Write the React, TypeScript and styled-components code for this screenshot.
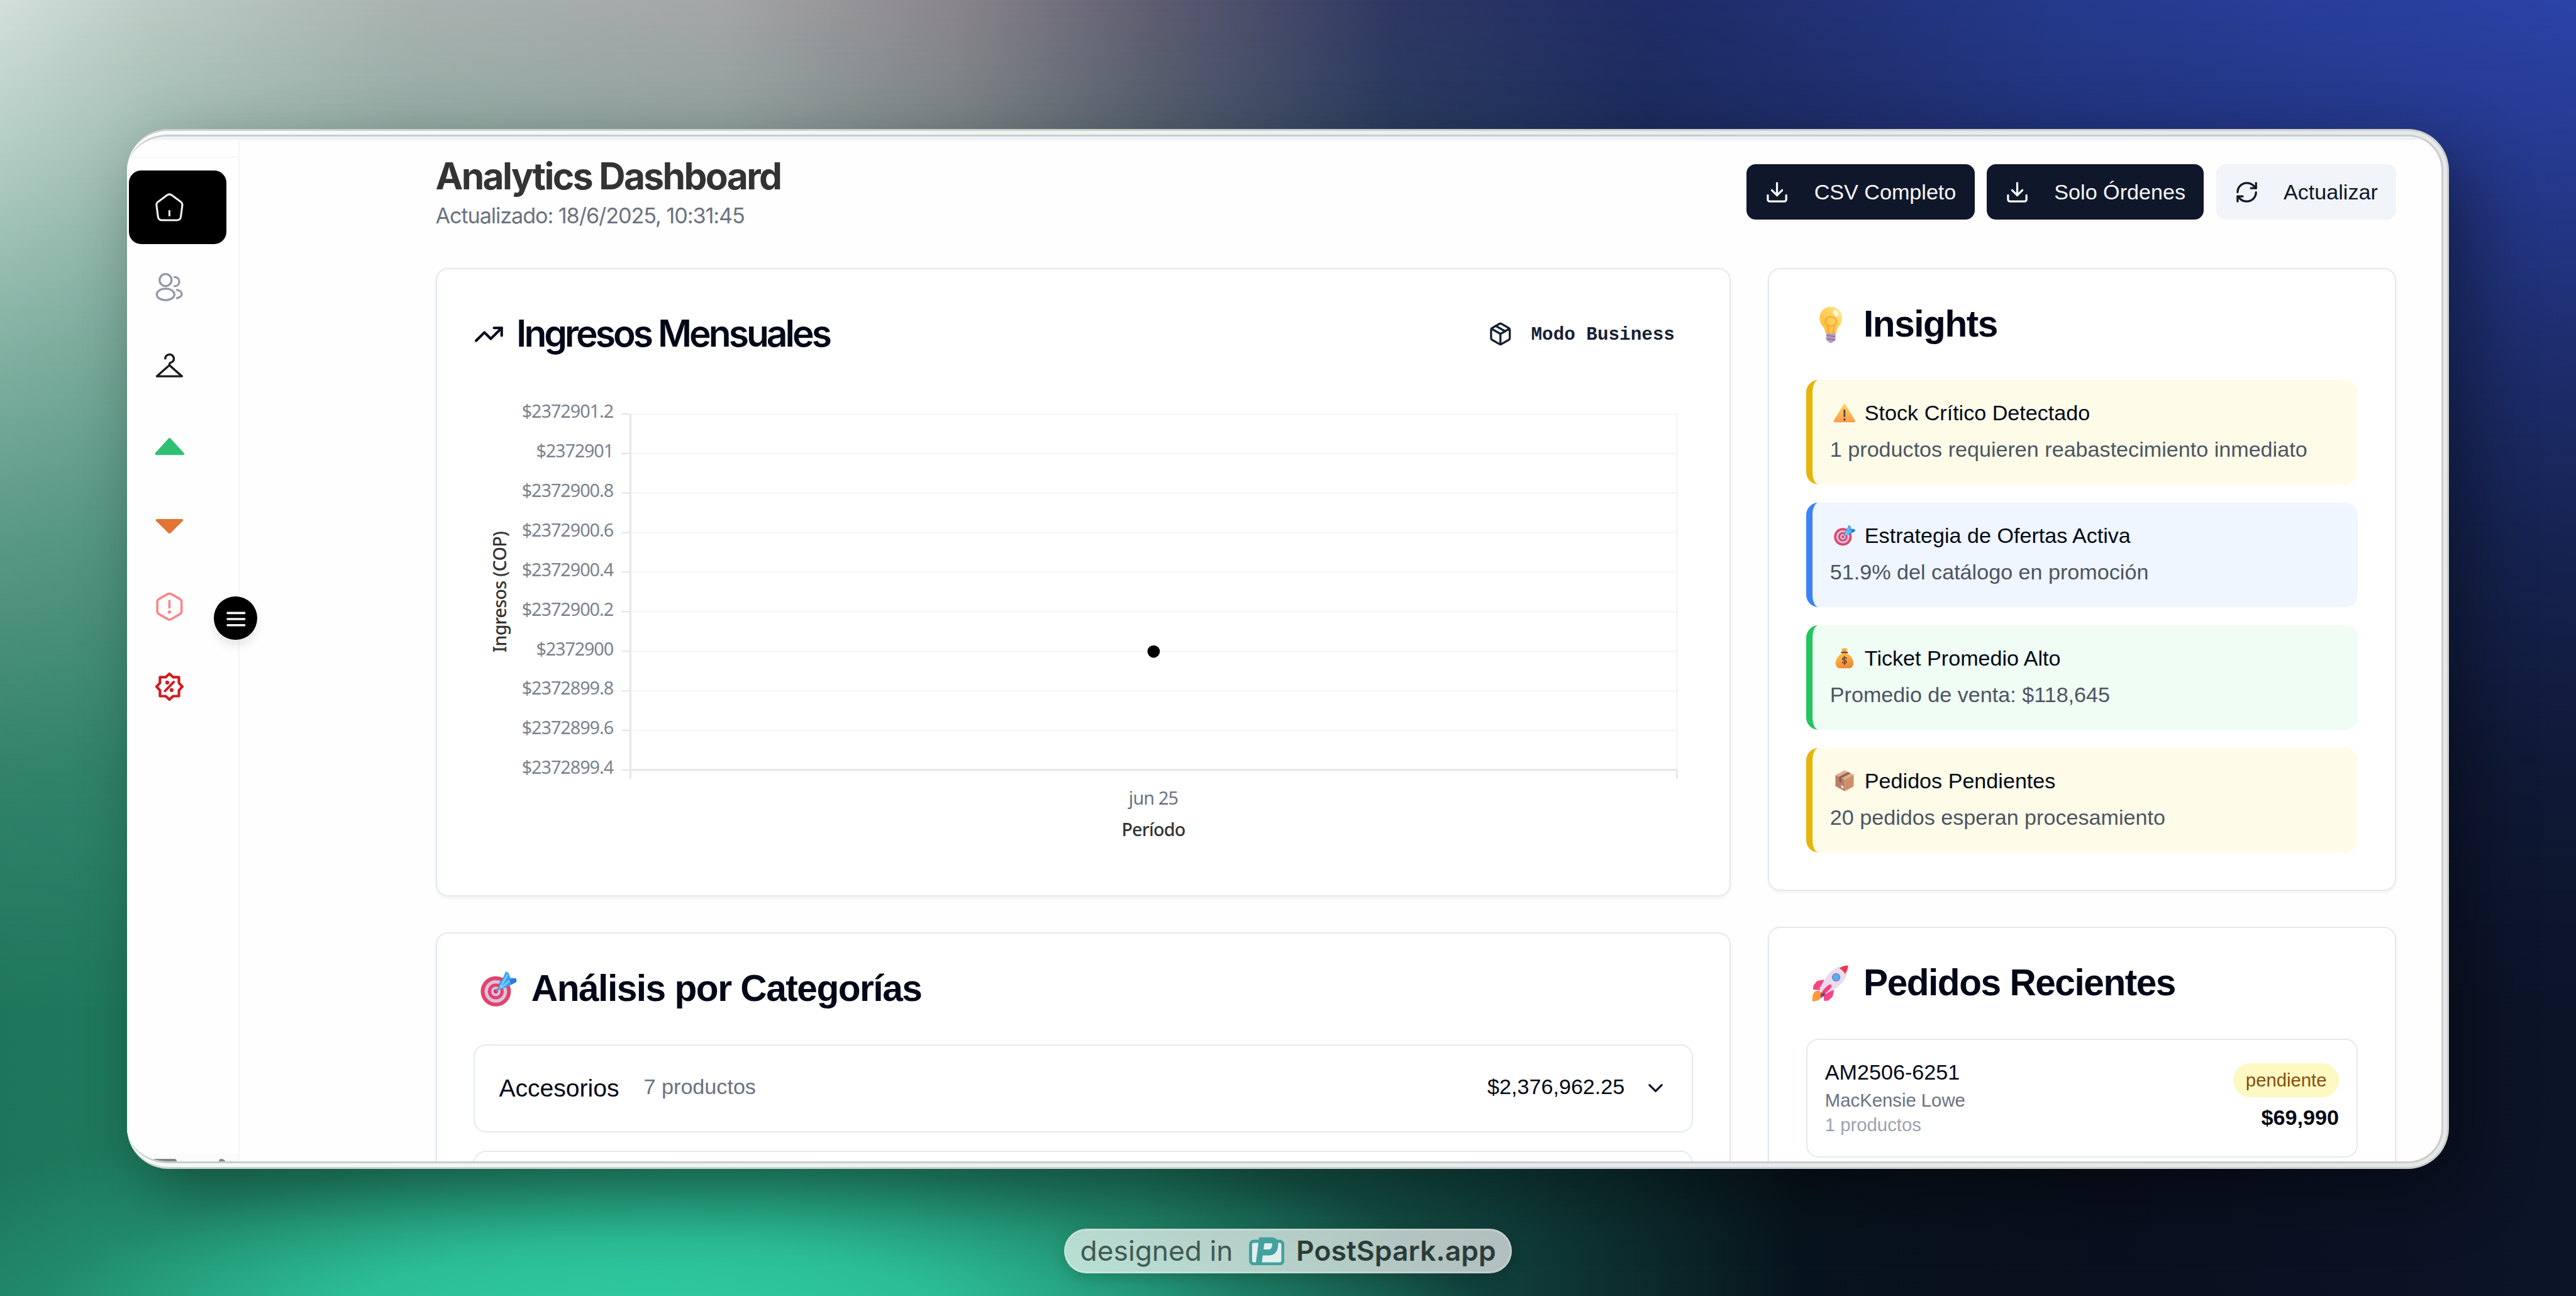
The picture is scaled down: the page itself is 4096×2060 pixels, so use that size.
import React from "react";
import styled, { createGlobalStyle } from "styled-components";
import { ChevronDown, Download, Package, RefreshCw, TrendingUp } from "lucide-react";

const SCALE = 4096 / 4140;
const u = (n: number) => `${(n * SCALE).toFixed(2)}px`;

const sans = `"Liberation Sans", Arial, sans-serif`;
const inter = `Inter, "Liberation Sans", sans-serif`;

const GlobalStyle = createGlobalStyle`
  * { box-sizing: border-box; }
  html, body { margin: 0; padding: 0; }
  body { font-family: ${sans}; color: #020817; overflow: hidden; }
  svg { display: block; flex: none; }
`;

/* ---------- Backdrop ---------- */

const Backdrop = styled.div`
  position: relative;
  width: 4096px;
  height: 2060px;
  overflow: hidden;
  display: flex;
  flex-direction: column;
  padding-top: ${u(207)};
  background: linear-gradient(90deg, #d3e0db 0%, #bccbc5 6%, #a9b3b0 16%, #a5a6a8 28%, #8b868c 37%, #5d5c70 45%, #2f3863 54%, #1f2c66 64%, #253a8c 80%, #2c43a8 100%);
  isolation: isolate;

  &::before {
    content: "";
    position: absolute;
    inset: 0;
    z-index: -1;
    background: linear-gradient(90deg, #1d765b 0%, #1e7c5f 12%, #208768 30%, #1b6f58 44%, #103f3b 58%, #07131c 70%, #090f1e 82%, #0c1428 100%);
    mask-image: linear-gradient(180deg, transparent 0%, rgba(0, 0, 0, 0.18) 12%, rgba(0, 0, 0, 0.43) 26%, rgba(0, 0, 0, 0.68) 42%, rgba(0, 0, 0, 0.89) 60%, #000 78%);
  }

  &::after {
    content: "";
    position: absolute;
    inset: 0;
    z-index: -1;
    background: radial-gradient(ellipse 33% 20% at 25% 104%, rgba(48, 210, 167, 1) 0%, rgba(46, 200, 158, 0.85) 40%, rgba(40, 170, 135, 0.35) 75%, rgba(32, 140, 110, 0) 100%);
  }
`;

/* ---------- Window frame ---------- */

const FrameOuter = styled.div`
  margin-left: ${u(204)};
  width: ${u(3732)};
  height: ${u(1671)};
  flex: none;
  padding: ${u(3)} ${u(3)} ${u(3)} 0;
  border-radius: ${u(66)};
  background: #cbcfcd;
  box-shadow: ${u(30)} ${u(40)} ${u(105)} rgba(0, 0, 0, 0.38);
`;

const FrameMiddle = styled.div`
  height: 100%;
  padding: ${u(6)} ${u(6)} ${u(6)} 0;
  border-radius: ${u(66)} ${u(63)} ${u(63)} ${u(66)} / ${u(63)};
  background: linear-gradient(105deg, #f9fbf9 0%, #e9f7f3 35%, #e8ebee 65%, #e5e7e9 100%);
`;

const FrameInner = styled.div`
  height: 100%;
  padding: ${u(3)} ${u(3)} ${u(3)} 0;
  border-radius: ${u(66)} ${u(57)} ${u(57)} ${u(66)} / ${u(57)};
  background: #cacdcc;
`;

const Screen = styled.div`
  position: relative;
  height: 100%;
  display: flex;
  flex-direction: column;
  overflow: hidden;
  border-radius: ${u(66)} ${u(54)} ${u(54)} ${u(66)} / ${u(54)};
  background: #fefefe;
`;

const BrowserEdge = styled.div`
  flex: none;
  height: ${u(6)};
  background: #edf2fc;
  border-bottom: 2px solid #f3f3f4;
`;

const Body = styled.div`
  flex: 1;
  min-height: 0;
  display: flex;
`;

/* ---------- Sidebar ---------- */

const Sidebar = styled.aside`
  flex: none;
  width: ${u(181)};
  display: flex;
  flex-direction: column;
  border-right: 2px solid #f5f5f6;
`;

const SidebarTop = styled.div`
  flex: none;
  height: ${u(29)};
  border-bottom: 2px solid #f6f6f6;
`;

const Nav = styled.nav`
  flex: 1;
  display: flex;
  flex-direction: column;
  gap: ${u(9.9)};
  padding: ${u(20)} 0 0 ${u(3.6)};
`;

const NavItem = styled.a<{ $active?: boolean }>`
  flex: none;
  width: ${u(156)};
  height: ${u(118.4)};
  padding-left: ${u(39.8)};
  display: flex;
  align-items: center;
  border-radius: ${u(19.7)};
  background: ${(p) => (p.$active ? "#000" : "transparent")};

  svg { width: ${u(49.3)}; height: ${u(49.3)}; overflow: visible; }
`;

const SidebarFooter = styled.div`
  flex: none;
  height: ${u(12.5)};
  padding: ${u(8)} 0 0 ${u(42)};
  display: flex;
  gap: ${u(68)};
  background: #fbfbfb;
`;

const FooterAvatar = styled.div`
  width: ${u(38)};
  height: ${u(20)};
  border-radius: ${u(4)};
  background: #868686;
`;

const FooterCaret = styled.div`
  width: ${u(11)};
  height: ${u(20)};
  border-radius: ${u(5)} ${u(9)} 0 0;
  background: #8b8b8b;
`;

const MenuToggle = styled.button`
  position: absolute;
  left: ${u(140)};
  top: ${u(739)};
  width: ${u(69)};
  height: ${u(70)};
  padding: 0;
  border: 0;
  border-radius: 50%;
  background: #000;
  display: grid;
  place-items: center;
  box-shadow: 0 ${u(10)} ${u(15)} rgba(0, 0, 0, 0.09);

  svg { width: ${u(36)}; height: ${u(36)}; }
`;

/* ---------- Main ---------- */

const Main = styled.main`
  flex: 1;
  padding: ${u(19)} ${u(73)} 0 ${u(315)};
`;

const Header = styled.header`
  height: ${u(127)};
  display: flex;
  align-items: center;
  justify-content: space-between;
`;

const PageTitle = styled.h1`
  margin: 0;
  padding-top: ${u(1.5)};
  font: 650 ${u(59.2)} / ${u(77.5)} ${inter};
  letter-spacing: ${u(-2.6)};
  color: #333;
`;

const Updated = styled.p`
  margin: 0;
  font: 400 ${u(34.5)} / ${u(49.3)} ${inter};
  letter-spacing: ${u(-1.06)};
  color: #6b7280;
`;

const Actions = styled.div`
  display: flex;
  gap: ${u(19.7)};
  padding-top: ${u(2)};
`;

const ActionButton = styled.button<{ $soft?: boolean }>`
  height: ${u(89)};
  padding: 0 ${u(29.5)};
  display: flex;
  align-items: center;
  gap: ${u(39.5)};
  border: 0;
  border-radius: ${u(15)};
  font: 400 ${u(34.5)} / ${u(49.3)} ${sans};
  color: ${(p) => (p.$soft ? "#0f172a" : "#f8fafc")};
  background: ${(p) => (p.$soft ? "#f1f5f9" : "#0f172a")};

  svg { width: ${u(39.5)}; height: ${u(39.5)}; }
`;

const Columns = styled.div`
  margin-top: ${u(60)};
  display: grid;
  grid-template-columns: ${u(2082)} ${u(1010)};
  gap: ${u(59)};
  align-items: start;
`;

const Column = styled.div`
  display: flex;
  flex-direction: column;
  gap: ${u(58)};
`;

const Card = styled.section<{ $height?: number }>`
  ${(p) => (p.$height ? `height: ${u(p.$height)};` : "")}
  padding: ${u(59.4)};
  border: 2px solid #e4e9f1;
  border-radius: ${u(19.7)};
  background: #fff;
  box-shadow: 0 ${u(2.5)} ${u(5)} rgba(0, 0, 0, 0.05);
`;

const ChartHeader = styled.div`
  height: ${u(89)};
  display: flex;
  align-items: center;
  justify-content: space-between;
`;

const ChartTitle = styled.h2`
  margin: 0;
  display: flex;
  align-items: center;
  gap: ${u(19.2)};
  font: 600 ${u(59.2)} / ${u(79)} ${inter};
  letter-spacing: ${u(-3.95)};

  svg { width: ${u(49.3)}; height: ${u(49.3)}; }
  span { padding-bottom: ${u(2)}; }
`;

const ModeButton = styled.button`
  height: ${u(89)};
  padding: 0 ${u(29)};
  display: flex;
  align-items: center;
  gap: ${u(29)};
  border: 0;
  background: none;
  color: #172033;
  font: 700 ${u(29.6)} / ${u(40)} "Liberation Mono", monospace;

  svg { width: ${u(40)}; height: ${u(40)}; }
  span { padding-top: ${u(4)}; }
`;

const ChartSvg = styled.svg`
  width: ${u(1958)};
  height: ${u(797)};
  font-family: "Noto Sans", "Open Sans", sans-serif;
`;

const CardTitle = styled.h2`
  margin: 0 0 ${u(58.8)};
  height: ${u(59.2)};
  padding-bottom: ${u(1.5)};
  display: flex;
  align-items: center;
  gap: ${u(12.5)};
  font: 700 ${u(59.2)} / ${u(59.2)} ${sans};
  letter-spacing: ${u(-1.48)};
  white-space: nowrap;
`;

const EmojiBox = styled.span<{ $w: number; $s: number }>`
  width: ${(p) => u(p.$w)};
  display: grid;
  place-items: center;

  svg { width: ${(p) => u(p.$s)}; height: ${(p) => u(p.$s)}; overflow: visible; }
`;

const Stack = styled.div`
  display: flex;
  flex-direction: column;
  gap: ${u(29.6)};
`;

const Alert = styled.div<{ $bg: string; $line: string }>`
  height: ${u(167.6)};
  padding: ${u(28)} ${u(28.6)};
  border-left: 10px solid ${(p) => p.$line};
  border-radius: ${u(19.7)};
  background: ${(p) => p.$bg};
`;

const AlertTitle = styled.div`
  display: flex;
  align-items: center;
  gap: ${u(9.6)};
  font-size: ${u(34.5)};
  line-height: ${u(49.3)};
  white-space: nowrap;
`;

const AlertText = styled.div`
  margin-top: ${u(9.9)};
  font-size: ${u(34.5)};
  line-height: ${u(49.3)};
  color: #4b5563;
  white-space: nowrap;
`;

const CategoryRow = styled.div`
  height: ${u(141.5)};
  padding: 0 ${u(38.5)};
  display: flex;
  align-items: center;
  border: 2px solid #e4e9f1;
  border-radius: ${u(19.7)};
`;

const CategoryName = styled.span`
  font-size: ${u(39.5)};
`;

const CategoryCount = styled.span`
  margin-left: ${u(39.5)};
  padding-bottom: ${u(5)};
  font-size: ${u(34.5)};
  color: #6b7280;
`;

const CategoryTotal = styled.span`
  margin-left: auto;
  margin-right: ${u(29.6)};
  padding-bottom: ${u(5)};
  font-size: ${u(34.5)};
`;

const OrderRow = styled.div`
  height: ${u(191)};
  padding: ${u(27.6)} ${u(28.6)} 0;
  display: flex;
  justify-content: space-between;
  border: 2px solid #e4e9f1;
  border-radius: ${u(19.7)};
`;

const OrderId = styled.div`
  font-size: ${u(34.5)};
  line-height: ${u(49.3)};
`;

const OrderMeta = styled.div<{ $faint?: boolean }>`
  font-size: ${u(29.6)};
  line-height: ${u(39.5)};
  color: ${(p) => (p.$faint ? "#9ca3af" : "#6b7280")};
`;

const OrderSide = styled.div`
  padding-top: ${u(10.5)};
  display: flex;
  flex-direction: column;
  align-items: flex-end;
  gap: ${u(8.5)};
`;

const Badge = styled.span`
  height: ${u(54)};
  padding: 0 ${u(19.7)};
  border-radius: ${u(27)};
  background: #fef9c3;
  color: #854d0e;
  font-size: ${u(29.6)};
  line-height: ${u(54)};
`;

const OrderTotal = styled.div`
  font-weight: 700;
  font-size: ${u(34.5)};
  line-height: ${u(49.3)};
`;

/* ---------- Watermark ---------- */

const Watermark = styled.div`
  align-self: center;
  margin-top: ${u(96)};
  width: ${u(720)};
  height: ${u(72)};
  padding: 0 ${u(22.5)} 0 ${u(23)};
  display: flex;
  align-items: center;
  border: 3px solid rgba(255, 255, 255, 0.22);
  border-radius: ${u(36)};
  background: rgba(255, 255, 255, 0.68);
  box-shadow: 0 ${u(8)} ${u(24)} rgba(0, 0, 0, 0.16);
  font: 400 ${u(44.8)} / ${u(60)} ${inter};
  color: #3f5a53;
  white-space: nowrap;

  strong { margin-left: auto; font-weight: 600; color: #2b3c38; letter-spacing: ${u(0.15)}; }
  svg { margin-left: ${u(26)}; width: ${u(57)}; height: ${u(46)}; }
`;

/* ---------- Emoji drawings ---------- */

const Bulb = () => (
  <svg viewBox="0 0 32 32">
    <defs>
      <linearGradient id="bulb" x1="0" y1="1" x2="1" y2="0">
        <stop offset="0" stopColor="#ffb636" />
        <stop offset="0.6" stopColor="#ffd35a" />
        <stop offset="1" stopColor="#fff3a8" />
      </linearGradient>
    </defs>
    <path d="M12 22.5h8v6.3c0 1.2-1 1.7-2 1.9-.4.8-1 1.3-2 1.3s-1.6-.5-2-1.3c-1-.2-2-.7-2-1.9z" fill="#b79bc0" />
    <path d="M12.2 25.2l7.6 1.2M12.2 28l7.6 1.2" stroke="#8f6fa0" strokeWidth="1" />
    <path d="M16 .3c5.6 0 9.8 4.4 9.8 9.8 0 3.200-1.300 5.400-2.900 7.500-1.300 1.700-1.900 3.200-2.100 5.900h-9.600c-.2-2.700-.8-4.200-2.100-5.900C7.500 15.500 6.200 13.300 6.200 10.100 6.200 4.700 10.400.3 16 .3z" fill="url(#bulb)" />
    <path d="M14 23.300l-.9-6.800c-1.300-.8-2-2-2-3.400 0-2.100 1.900-4 4.900-4s4.900 1.900 4.900 4c0 1.400-.7 2.600-2 3.400l-.9 6.800M13.100 16.500c2 1 3.800 1 5.800 0" fill="none" stroke="#f79f35" strokeWidth="1" />
    <ellipse cx="20.300" cy="6" rx="2" ry="3.300" fill="#fff" opacity=".75" transform="rotate(-30 20.300 6)" />
  </svg>
);

const Target = () => (
  <svg viewBox="0 0 32 32">
    <circle cx="13.600" cy="18.300" r="13.400" fill="#e3436c" />
    <circle cx="13.600" cy="18.300" r="10" fill="#d5c4de" />
    <circle cx="13.600" cy="18.300" r="7" fill="#e93e6c" />
    <circle cx="13.600" cy="18.300" r="4.200" fill="#d5c4de" />
    <circle cx="13.600" cy="18.300" r="1.900" fill="#d53164" />
    <path d="M14 18L22 9.500" stroke="#8a7796" strokeWidth="1.500" strokeLinecap="round" />
    <path d="M16 16.400l.3-5.200 3-3.600 3.200-7.100 2.600 1.700 1.200 3.900 5 .6.700 3-4.600 2.700-4.800 2.200-3.400 1.700z" fill="#3d9ff0" />
    <path d="M17 15.700L24 3.500M18.500 15L28 7" stroke="#74d0fb" strokeWidth="1.500" />
    <path d="M25.600 7.600l5.900-1 .5 3.200-4.600 2.500z" fill="#2b78e4" />
  </svg>
);

const Rocket = () => (
  <svg viewBox="0 0 32 32">
    <path d="M1 25.500c1-3 4.500-4 6.500-2s1.200 5.300-1.500 6.800c-1.800 1-4 1.500-5.500 1.300-.3-2 .1-4.300.5-6.100z" fill="#ff9a3d" />
    <path d="M10.500 13L4.500 14.200 1.300 18l-.3 3.500 6 .5zM19 21.500l-1.200 6L14 31l-3.500.3-.8-6z" fill="#fb4484" />
    <path d="M31 1c-7.500-.4-14 3-18.500 9.500L6.500 20.500l5 5 10-6C28 15 31.500 8.500 31 1z" fill="#e7dcec" />
    <path d="M28.500 8.300c1.900-3.700 2.700-5.600 2.500-7.300-2-.2-4.200.5-7.500 2.200 2 1 4 3 5 5.100z" fill="#f0364d" />
    <circle cx="20.800" cy="11" r="3.600" fill="#7d86b8" />
    <circle cx="20.800" cy="11" r="2.600" fill="#55b0fb" />
    <path d="M14.500 17.500c-3.500 2.500-6.500 6-7.700 9.500 3.700-.9 7.200-4 9.700-7.500 1-1.600-.5-3-2-2z" fill="#fb3f7c" />
    <path d="M8 25.500l2.800-1.500.6 2-3.900 3z" fill="#5a4a86" />
  </svg>
);

const Warning = () => (
  <svg viewBox="0 0 32 32">
    <defs>
      <linearGradient id="warn" x1="0" y1="0" x2="0" y2="1">
        <stop offset="0" stopColor="#ffd45c" />
        <stop offset="1" stopColor="#fc9c4e" />
      </linearGradient>
    </defs>
    <path d="M14.500 3.800c.7-1.200 2.300-1.200 3 0L32.300 28.400c.6 1.100-.1 2.400-1.400 2.400H1.100c-1.300 0-2-1.300-1.400-2.400z" fill="url(#warn)" />
    <path d="M16 12.500v9" stroke="#5b4a52" strokeWidth="2.800" strokeLinecap="round" />
    <circle cx="16" cy="26.500" r="1.800" fill="#5b4a52" />
  </svg>
);

const MoneyBag = () => (
  <svg viewBox="0 0 32 32">
    <defs>
      <linearGradient id="bag" x1="0" y1="0" x2=".4" y2="1">
        <stop offset="0" stopColor="#ffc94a" />
        <stop offset="1" stopColor="#ee8a36" />
      </linearGradient>
    </defs>
    <path d="M11.500 1.500c1.500 1 2.500.8 4-1 1.500 1.800 3 2 5 .8l-1.700 6.200h-5.600z" fill="#f4a93c" />
    <path d="M12.800 9C6 12 2.500 18.500 2.500 24c0 5 3.500 7.700 7 7.700h13c3.500 0 7-2.700 7-7.700 0-5.500-3.500-12-10.300-15z" fill="url(#bag)" />
    <path d="M12 7.700h8" stroke="#7b4a3a" strokeWidth="2.600" strokeLinecap="round" />
    <path d="M19 16.600c-.9-1.300-5.700-1.600-5.700 1 0 2.800 5.700 1.500 5.700 4.300 0 2.500-4.800 2.300-6 .6M16 13.500v12.500" fill="none" stroke="#7b4a3a" strokeWidth="1.800" strokeLinecap="round" />
  </svg>
);

const Parcel = () => (
  <svg viewBox="0 0 32 32">
    <path d="M16 .5L30 7 16.500 14.500 2.300 7.600z" fill="#dfae8c" />
    <path d="M2.300 7.600L16.500 14.500V32L3.800 25.300c-1-.5-1.500-1.300-1.500-2.500z" fill="#bb7f66" />
    <path d="M30 7L16.500 14.500V32l12-6.500c1-.5 1.500-1.300 1.500-2.500z" fill="#cd9069" />
    <path d="M21.500 3L7.800 10.300v7l3.700 1.800v-7L25.500 5z" fill="#8f6157" />
    <path d="M11 22.500l3.500 1.800v4L11 26.500z" fill="#f0dcf0" />
  </svg>
);

/* ---------- Sidebar icons ---------- */

const HomeIcon = () => (
  <svg viewBox="0 0 24 24" fill="none" stroke="#f4f4f4" strokeWidth="1.500" strokeLinecap="round" strokeLinejoin="round">
    <path d="M10.100 2.600a3.200 3.200 0 0 1 3.800 0L21 7.900a2.700 2.700 0 0 1 1.100 2.600l-1.200 9.100A2.900 2.900 0 0 1 18 22.100H6a2.900 2.900 0 0 1-2.900-2.500L1.900 10.500A2.700 2.700 0 0 1 3 7.900z" />
    <path d="M12 14.900v3.600" />
  </svg>
);

const UsersIcon = () => (
  <svg viewBox="0 0 24 24" fill="none" stroke="#9497a5" strokeWidth="1.600" strokeLinecap="round">
    <circle cx="9" cy="6.500" r="4.700" />
    <ellipse cx="9" cy="17.700" rx="6.900" ry="4.500" />
    <path d="M16 4.100c2.300.1 3.700 1.700 3.700 3.600s-1.400 3.500-3.700 3.600M17.900 14.200c2.300.4 3.800 1.700 3.800 3.200s-1.500 2.700-3.800 3.200" />
  </svg>
);

const HangerIcon = () => (
  <svg viewBox="0 0 49 49" fill="none" stroke="#1a1a1a" strokeWidth="3.400" strokeLinejoin="round">
    <path d="M17.800 12.400v-1a6.900 6.900 0 0 1 13.800-.3c.1 3.700-2.300 5.300-4.800 6.200-1.600.6-2.300 1.400-2.300 3v1.200L4.500 39.300h40L24.500 21.500" />
  </svg>
);

const UpIcon = () => (
  <svg viewBox="0 0 49 49" fill="#2fc173">
    <path d="M23.200 10.700q1.500-1.200 3 0L47.800 34.500q1.200 2.700-1.500 3H3.200q-2.700-.3-1.500-3z" />
  </svg>
);

const DownIcon = () => (
  <svg viewBox="0 0 49 49" fill="#e27435">
    <path d="M23.100 34.600q1.500 1.200 3 0L46 15q1.200-2.600-1.500-3H4.500q-2.700.4-1.500 3z" />
  </svg>
);

const HexAlertIcon = () => (
  <svg viewBox="0 0 49 49" fill="none" stroke="#ff8488" strokeWidth="3.600" strokeLinecap="round">
    <path d="M21.800 4.200q2.700-1.500 5.400 0L41.200 12.200q2.700 1.600 2.700 4.700V31.600q0 3.100-2.700 4.700L27.200 44.400q-2.700 1.500-5.400 0L7.800 36.300q-2.700-1.600-2.700-4.700V16.900q0-3.100 2.700-4.700z" />
    <path d="M24.500 15.200v10.600" />
    <circle cx="24.500" cy="33" r="2.700" fill="#ff8488" stroke="none" />
  </svg>
);

const DiscountIcon = () => (
  <svg viewBox="0 0 49 49" fill="none" stroke="#cf1c1f" strokeWidth="4.200" strokeLinejoin="round" strokeLinecap="round">
    <path d="M24.500 4l6 5.500h9.200v9.200l5.400 5.800-5.400 6v9.200h-9.200l-6 5.400-6-5.400H9.400v-9.200L4 24.500l5.400-5.800V9.500h9.100z" />
    <path d="M17.500 31.500L31.500 17" strokeWidth="3.800" />
    <circle cx="21" cy="18" r="3.100" fill="#cf1c1f" stroke="none" />
    <circle cx="28" cy="30" r="3.100" fill="#cf1c1f" stroke="none" />
  </svg>
);

const BarsIcon = () => (
  <svg viewBox="0 0 36 36" stroke="#f4f4f4" strokeWidth="3.600" strokeLinecap="round">
    <path d="M5 9.500h27M5 19.200h27M5 29h27" />
  </svg>
);

const SparkLogo = () => (
  <svg viewBox="0 0 57 46">
    <rect x="2.500" y="7" width="52" height="36.500" rx="5.500" fill="#e1f0ed" stroke="#43a1a0" strokeWidth="5" />
    <path d="M15.500 44L20.500 5.500H36.500Q43 5.500 42 13.500Q41 25 31.500 25H22" fill="none" stroke="#43a1a0" strokeWidth="9.500" />
  </svg>
);

/* ---------- Chart ---------- */

const ticks = ["$2372901.2", "$2372901", "$2372900.8", "$2372900.6", "$2372900.4", "$2372900.2", "$2372900", "$2372899.8", "$2372899.6", "$2372899.4"];
const AXIS = { left: 1013.5, right: 2695.5, top: 665.4, step: 63.54 };
const axisBottom = AXIS.top + AXIS.step * 9;

const RevenueChart = () => (
  <ChartSvg viewBox="761.5 581.5 1958 797">
    {ticks.map((label, i) => {
      const y = AXIS.top + AXIS.step * i;
      return (
        <g key={label}>
          <line x1={AXIS.left} x2={AXIS.right} y1={y} y2={y} stroke="#f5f6f7" strokeWidth="2.400" />
          <line x1={AXIS.left - 14} x2={AXIS.left} y1={y} y2={y} stroke="#e2e6ea" strokeWidth="2.400" />
          <text x="987" y={y + 6.500} textAnchor="end" fontSize="29" textLength={label.length > 8 ? 148 : 125} fill="#7b8290">
            {label}
          </text>
        </g>
      );
    })}
    <line x1={AXIS.right} x2={AXIS.right} y1={AXIS.top} y2={axisBottom} stroke="#f3f4f6" strokeWidth="2.400" />
    <line x1={AXIS.left} x2={AXIS.left} y1={AXIS.top} y2={axisBottom + 14} stroke="#e4e8ec" strokeWidth="3.400" />
    <line x1={AXIS.left} x2={AXIS.right} y1={axisBottom} y2={axisBottom} stroke="#e4e8ec" strokeWidth="3.400" />
    <line x1={AXIS.right} x2={AXIS.right} y1={axisBottom} y2={axisBottom + 14} stroke="#e4e8ec" strokeWidth="3" />
    <circle cx="1854.500" cy="1047" r="10" fill="#000" />
    <text x="1854.500" y="1293" textAnchor="middle" fontSize="29" textLength="80" fill="#6b7280">jun 25</text>
    <text x="1854.500" y="1344" textAnchor="middle" fontSize="29" fontWeight="500" textLength="103" fill="#333">Período</text>
    <text transform="translate(814.500 951) rotate(-90)" textAnchor="middle" fontSize="29" fontWeight="540" textLength="195" fill="#333">
      Ingresos (COP)
    </text>
  </ChartSvg>
);

/* ---------- Data ---------- */

const alerts = [
  { icon: <Warning />, title: "Stock Crítico Detectado", text: "1 productos requieren reabastecimiento inmediato", bg: "#fefce8", line: "#eab308" },
  { icon: <Target />, title: "Estrategia de Ofertas Activa", text: "51.9% del catálogo en promoción", bg: "#eff6ff", line: "#3b82f6" },
  { icon: <MoneyBag />, title: "Ticket Promedio Alto", text: "Promedio de venta: $118,645", bg: "#f0fdf4", line: "#22c55e" },
  { icon: <Parcel />, title: "Pedidos Pendientes", text: "20 pedidos esperan procesamiento", bg: "#fefce8", line: "#eab308" },
];

const navIcons = [HomeIcon, UsersIcon, HangerIcon, UpIcon, DownIcon, HexAlertIcon, DiscountIcon];

export default function App() {
  return (
    <>
      <GlobalStyle />
      <Backdrop>
        <FrameOuter>
          <FrameMiddle>
            <FrameInner>
              <Screen>
                <BrowserEdge />
                <Body>
                  <Sidebar>
                    <SidebarTop />
                    <Nav>
                      {navIcons.map((Icon, i) => (
                        <NavItem key={i} $active={i === 0}>
                          <Icon />
                        </NavItem>
                      ))}
                    </Nav>
                    <SidebarFooter>
                      <FooterAvatar />
                      <FooterCaret />
                    </SidebarFooter>
                  </Sidebar>
                  <Main>
                    <Header>
                      <div>
                        <PageTitle>Analytics Dashboard</PageTitle>
                        <Updated>Actualizado: 18/6/2025, 10:31:45</Updated>
                      </div>
                      <Actions>
                        <ActionButton><Download />CSV Completo</ActionButton>
                        <ActionButton><Download />Solo Órdenes</ActionButton>
                        <ActionButton $soft><RefreshCw />Actualizar</ActionButton>
                      </Actions>
                    </Header>
                    <Columns>
                      <Column>
                        <Card $height={1009}>
                          <ChartHeader>
                            <ChartTitle><TrendingUp /><span>Ingresos Mensuales</span></ChartTitle>
                            <ModeButton><Package /><span>Modo Business</span></ModeButton>
                          </ChartHeader>
                          <RevenueChart />
                        </Card>
                        <Card>
                          <CardTitle><EmojiBox $w={80} $s={58}><Target /></EmojiBox>Análisis por Categorías</CardTitle>
                          <Stack>
                            <CategoryRow>
                              <CategoryName>Accesorios</CategoryName>
                              <CategoryCount>7 productos</CategoryCount>
                              <CategoryTotal>$2,376,962.25</CategoryTotal>
                              <ChevronDown size={39} color="#0f172a" />
                            </CategoryRow>
                            <CategoryRow />
                          </Stack>
                        </Card>
                      </Column>
                      <Column>
                        <Card>
                          <CardTitle><EmojiBox $w={80} $s={59}><Bulb /></EmojiBox>Insights</CardTitle>
                          <Stack>
                            {alerts.map((a) => (
                              <Alert key={a.title} $bg={a.bg} $line={a.line}>
                                <AlertTitle><EmojiBox $w={46} $s={34}>{a.icon}</EmojiBox>{a.title}</AlertTitle>
                                <AlertText>{a.text}</AlertText>
                              </Alert>
                            ))}
                          </Stack>
                        </Card>
                        <Card>
                          <CardTitle><EmojiBox $w={80} $s={60}><Rocket /></EmojiBox>Pedidos Recientes</CardTitle>
                          <OrderRow>
                            <div>
                              <OrderId>AM2506-6251</OrderId>
                              <OrderMeta>MacKensie Lowe</OrderMeta>
                              <OrderMeta $faint>1 productos</OrderMeta>
                            </div>
                            <OrderSide>
                              <Badge>pendiente</Badge>
                              <OrderTotal>$69,990</OrderTotal>
                            </OrderSide>
                          </OrderRow>
                        </Card>
                      </Column>
                    </Columns>
                  </Main>
                </Body>
                <MenuToggle><BarsIcon /></MenuToggle>
              </Screen>
            </FrameInner>
          </FrameMiddle>
        </FrameOuter>
        <Watermark>
          <span>designed in</span>
          <SparkLogo />
          <strong>PostSpark.app</strong>
        </Watermark>
      </Backdrop>
    </>
  );
}
